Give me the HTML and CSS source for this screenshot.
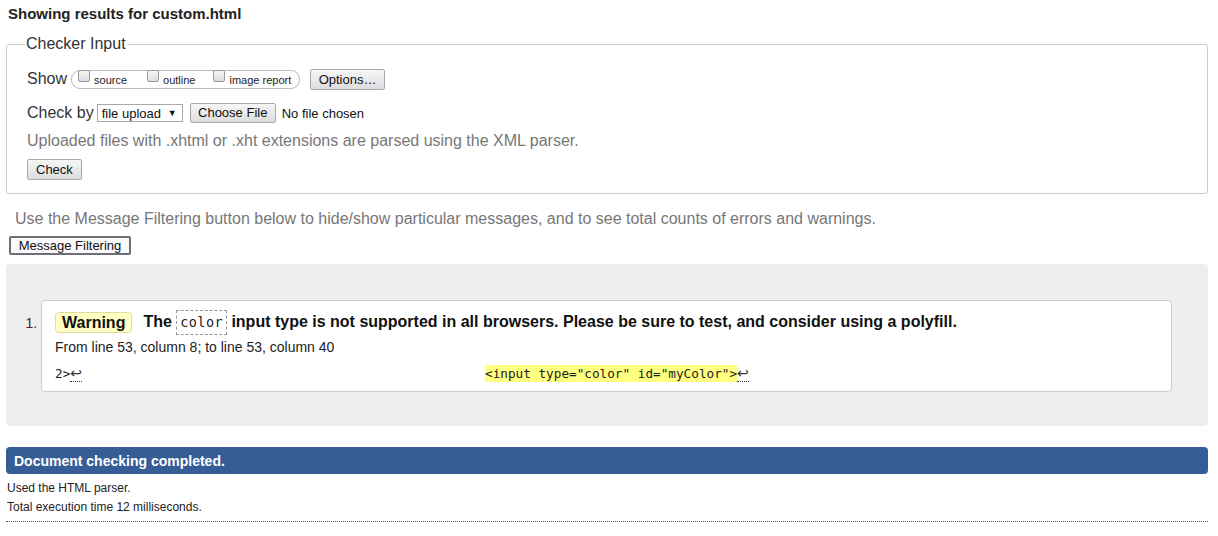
FILE: index.html
```html
<!DOCTYPE html>
<html>
<head>
<meta charset="utf-8">
<link rel="stylesheet" href="styles.css">
</head>
<body>
<div class="page">
  <h2 class="title">Showing results for custom.html</h2>
  <fieldset class="checker">
    <legend>Checker Input</legend>
    <div class="row show-row">
      <span class="lbl">Show</span>
      <span class="pill">
        <label class="opt"><input type="checkbox"><span>source</span></label>
        <label class="opt"><input type="checkbox"><span>outline</span></label>
        <label class="opt"><input type="checkbox"><span>image report</span></label>
      </span>
      <button class="btn options">Options…</button>
    </div>
    <div class="row by-row">
      <span class="lbl">Check by</span>
      <span class="select">file upload <span class="arrow">▼</span></span>
      <button class="btn choose">Choose File</button>
      <span class="nofile">No file chosen</span>
    </div>
    <p class="hint">Uploaded files with .xhtml or .xht extensions are parsed using the XML parser.</p>
    <button class="btn check">Check</button>
  </fieldset>
  <p class="filter-note">Use the Message Filtering button below to hide/show particular messages, and to see total counts of errors and warnings.</p>
  <button class="filter-btn">Message Filtering</button>
  <div class="results">
    <ol class="msgs">
      <li class="msg">
        <p class="msg-head"><span class="badge">Warning</span> <span class="msg-text">The <code class="kw">color</code> input type is not supported in all browsers. Please be sure to test, and consider using a polyfill.</span></p>
        <p class="loc">From line 53, column 8; to line 53, column 40</p>
        <p class="extract"><code>2&gt;<span class="lf">↩</span></code><code class="hl">&lt;input type="color" id="myColor"&gt;</code><code><span class="lf">↩</span></code></p>
      </li>
    </ol>
  </div>
  <div class="done">Document checking completed.</div>
  <p class="stat">Used the HTML parser.</p>
  <p class="stat">Total execution time 12 milliseconds.</p>
  <hr class="dots">
</div>
</body>
</html>
```
FILE: styles.css
```css
html, body { margin: 0; padding: 0; background: #fff; }
body { font-family: "Liberation Sans", Arial, sans-serif; color: #222; }
.page { padding: 0 10px 0 6px; }

.title {
  font-size: 15px; font-weight: bold; margin: 0; padding: 5px 0 0 2px;
  line-height: 18px; color: #222;
}

.checker {
  margin: 12px 0 0 0;
  border: 1px solid #ccc; border-radius: 3px;
  padding: 0 20px 13px 20px;
}
.checker legend {
  font-size: 16px; color: #333; padding: 0 1px; margin-left: -2px; line-height: 18px;
}
.row { display: flex; align-items: center; }
.lbl { font-size: 16px; color: #333; }
.show-row { margin-top: 15px; height: 22px; }
.pill {
  display: inline-flex; align-items: center; height: 17px;
  border: 1px solid #bbb; border-radius: 9px; margin-left: 4px; padding: 0 0 0 6px;
  width: 221px;
}
.opt { display: inline-flex; align-items: center; font-size: 11px; color: #222; }
.opt input {
  appearance: none; -webkit-appearance: none; margin: 0; width: 12px; height: 12px;
  border: 1px solid #999; border-radius: 2px; background: linear-gradient(#f6f6f6, #dedede);
  position: relative; top: -3px; box-sizing: border-box;
}
.opt span { margin-left: 4px; position: relative; top: 1px; }
.opt:nth-child(1) span { margin-right: 20px; }
.opt:nth-child(2) span { margin-right: 18px; }

.btn {
  font-family: "Liberation Sans", Arial, sans-serif; font-size: 13px; color: #111;
  background: linear-gradient(#f6f6f6, #dddddd); border: 1px solid #a9a9a9; border-radius: 2px;
  padding: 0 7px; height: 21px; line-height: 19px; cursor: default;
}
.options { margin-left: 10px; width: 75px; }

.by-row { margin-top: 12px; height: 22px; }
.select {
  margin-left: 3px; font-size: 13px; color: #111; border: 1px solid #a9a9a9;
  height: 18px; line-height: 17px; padding: 0 5px 0 4px; box-sizing: border-box; width: 86px;
  display: inline-flex; align-items: center; justify-content: space-between;
}
.select .arrow { font-size: 9px; }
.choose { margin-left: 7px; width: 86px; height: 20px; line-height: 18px; padding: 0; }
.nofile { font-size: 13px; color: #111; margin-left: 6px; }

.hint { margin: 7px 0 0 0; font-size: 16px; color: #777; line-height: 20px; }
.check { margin-top: 8px; height: 21px; padding: 0 8px; }

.filter-note { margin: 15px 0 0 9px; font-size: 16px; color: #777; line-height: 20px; }
.filter-btn {
  margin: 7px 0 0 3px; font-family: "Liberation Sans", Arial, sans-serif; font-size: 13px; color: #111;
  background: #fafafa; border: 2px solid #6d6f78; border-radius: 2px; height: 19px; line-height: 14px;
  padding: 0 6px; width: 122px;
}

.results {
  margin-top: 9px; background: #eeeeee; border-radius: 4px;
  padding: 36px 36px 34px 35px;
}
.msgs { margin: 0; padding: 0; list-style: decimal; }
.msg {
  background: #fff; border: 1px solid #ccc; border-radius: 4px; padding: 8px 12px 9px 13px;
  font-size: 14px; color: #333; list-style-position: outside; margin-left: 0;
}
.msg::marker { font-size: 14px; color: #522; }
.msg-head { margin: 0; display: flex; align-items: center; line-height: 25px; }
.badge {
  font-size: 16px; font-weight: bold; color: #111;
  background: #ffffc4; border: 1px solid #e0dc9c; border-radius: 4px;
  padding: 0 6px; line-height: 19px; height: 19px;
}
.msg-text { font-size: 16px; font-weight: bold; color: #111; margin-left: 11px; }
.kw {
  font-family: "DejaVu Sans Mono", monospace; font-weight: normal; font-size: 13.5px; color: #222;
  border: 1px dashed #999; padding: 3px 3px 4px 3px; letter-spacing: 0.4px;
}
.loc { margin: 3px 0 0 0; font-size: 14px; color: #222; line-height: 18px; }
.extract {
  margin: 9px 0 0 0; font-size: 12.7px; line-height: 17px; display: flex; white-space: pre;
}
.extract code { font-family: "DejaVu Sans Mono", monospace; font-size: 12.7px; color: #222; }
.extract .hl { background: #ffff80; margin-left: 403px; }
.lf {
  font-family: "DejaVu Sans", sans-serif; font-size: 14px;
  border-bottom: 1px dotted #333; color: #333; display: inline-block; line-height: 14px; padding-bottom: 1px;
}

.done {
  margin-top: 21px; background: #365d95; color: #fff; font-weight: bold; font-size: 14px;
  border-radius: 4px; height: 27px; line-height: 28px; padding-left: 8px;
}
.stat { margin: 7px 0 0 1px; font-size: 12px; color: #222; line-height: 15px; }
.stat + .stat { margin-top: 4px; }
.dots { margin: 6px 0 0 0; border: 0; border-top: 1px dotted #555; height: 0; }
```
